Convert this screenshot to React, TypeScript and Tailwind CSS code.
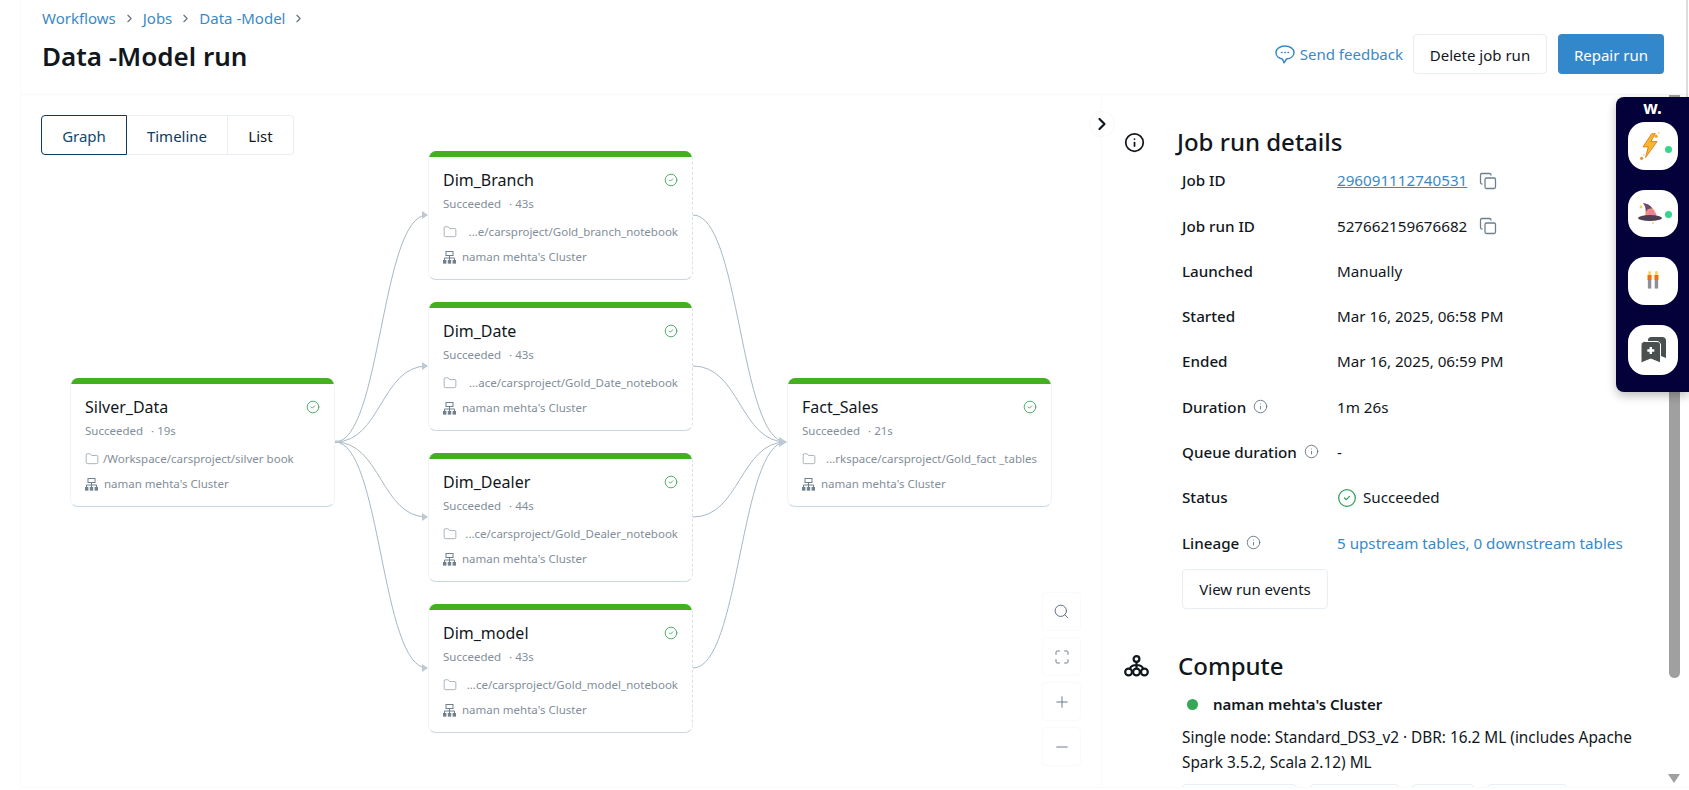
import React from "react";
import { ChevronRight, CircleCheck, Copy, Folder, Info, Maximize, Minus, Plus, Search } from "lucide-react";

const FONT = "font-['Noto_Sans','Open_Sans',sans-serif]";

interface NodeData {
  name: string;
  time: string;
  path: string;
  pos: string;
  pathClass: string;
  dashed?: boolean;
}

const NODES: NodeData[] = [
  { name: "Silver_Data", time: "19s", path: "/Workspace/carsproject/silver book", pos: "left-[49px] top-[283px]", pathClass: "ml-[4px]" },
  { name: "Dim_Branch", time: "43s", path: "...e/carsproject/Gold_branch_notebook", pos: "left-[407px] top-[56px]", pathClass: "ml-auto", dashed: true },
  { name: "Dim_Date", time: "43s", path: "...ace/carsproject/Gold_Date_notebook", pos: "left-[407px] top-[207px]", pathClass: "ml-auto", dashed: true },
  { name: "Dim_Dealer", time: "44s", path: "...ce/carsproject/Gold_Dealer_notebook", pos: "left-[407px] top-[358px]", pathClass: "ml-auto", dashed: true },
  { name: "Dim_model", time: "43s", path: "...ce/carsproject/Gold_model_notebook", pos: "left-[407px] top-[509px]", pathClass: "ml-auto", dashed: true },
  { name: "Fact_Sales", time: "21s", path: "...rkspace/carsproject/Gold_fact _tables", pos: "left-[766px] top-[283px]", pathClass: "ml-auto" },
];

// edge end points, in graph coordinates
const EDGE_Y = [120, 271, 422, 573];

function ClusterIcon() {
  return (
    <svg width="13" height="13" viewBox="0 0 13 13" fill="none" stroke="#6f7f8c" strokeWidth="1" className="shrink-0">
      <rect x="3" y="0.5" width="7" height="4" />
      <path d="M6.5 4.5V7M1.5 9.5V7H11.5V9.5M6.5 7V9.5" />
      <rect x="0.5" y="9.5" width="2.4" height="2.6" fill="#6f7f8c" />
      <rect x="5.3" y="9.5" width="2.4" height="2.6" fill="#6f7f8c" />
      <rect x="10.1" y="9.5" width="2.4" height="2.6" fill="#6f7f8c" />
    </svg>
  );
}

function ComputeIcon() {
  return (
    <svg width="25" height="22" viewBox="0 0 25 22" fill="none" stroke="#11171c" strokeWidth="2.2" className="shrink-0">
      <circle cx="12.5" cy="4" r="2.9" />
      <circle cx="4.6" cy="17" r="3.4" />
      <circle cx="12.5" cy="17" r="3.4" />
      <circle cx="20.4" cy="17" r="3.4" />
      <path d="M12.5 7V13.5M6 13.5C7 11 9.5 10 12.5 10C15.5 10 18 11 19 13.5" />
    </svg>
  );
}

function FeedbackIcon() {
  return (
    <svg width="20" height="19" viewBox="0 0 20 19" fill="none" stroke="#3b89c4" strokeWidth="1.5" className="shrink-0">
      <path d="M10 1C5 1 1 3.6 1 7.5C1 11 4 13.5 7.5 14L9 17.8L11.5 14C15.7 13.6 19 11 19 7.5C19 3.6 15 1 10 1Z" strokeLinejoin="round" />
      <path d="M6.5 7.5H7M9.8 7.5H10.3M13 7.5H13.5" strokeLinecap="round" />
    </svg>
  );
}

function JobNode({ node }: { node: NodeData }) {
  return (
    <div
      className={`absolute ${node.pos} h-[129px] w-[265px] overflow-hidden rounded-[8px] border border-t-0 border-b-[#c9d9e4] border-l-[#f1f4f7] bg-white px-[14px] ${node.dashed ? "border-r-[#d5e1e9] [border-right-style:dashed]" : "border-r-[#f1f4f7]"}`}
    >
      <div className="absolute inset-x-0 top-0 h-[6px] bg-[#44b01f]" />
      <div className="mt-[17px] flex h-[24px] items-center justify-between">
        <span className="text-[16px] leading-[24px] text-[#11171c]">{node.name}</span>
        <CircleCheck size={14} strokeWidth={1.5} className="text-[#3ba55c]" />
      </div>
      <div className="mt-[4px] flex h-[16px] items-center text-[11.5px] leading-[16px] text-[#828e99]">
        <span>Succeeded</span>
        <span className="ml-[8px]">· {node.time}</span>
      </div>
      <div className="mt-[12px] flex h-[16px] items-center text-[11.5px] leading-[16px] text-[#828e99]">
        <Folder size={14} strokeWidth={1} className="shrink-0 text-[#6f7f8c]" />
        <span className={`${node.pathClass} whitespace-nowrap`}>{node.path}</span>
      </div>
      <div className="mt-[9px] flex h-[16px] items-center text-[11.5px] leading-[16px] text-[#828e99]">
        <ClusterIcon />
        <span className="ml-[6px]">naman mehta's Cluster</span>
      </div>
    </div>
  );
}

function Edges() {
  return (
    <svg width="1060" height="690" className="absolute left-0 top-0" fill="none" stroke="#a8b8c5" strokeWidth="1">
      {EDGE_Y.map((y) => (
        <g key={y}>
          <path d={`M314 347C360 347 360 ${y} 406 ${y}`} />
          <path d={`M672 ${y}C719 ${y} 719 347 765 347`} />
          <path d={`M401 ${y - 4}L407 ${y}L401 ${y + 4}Z`} fill="#bcc9d3" stroke="none" />
        </g>
      ))}
      <path d="M758 342L766 347L758 352Z" fill="#bcc9d3" stroke="none" />
      <path d="M314 346.5H320" stroke="#bcc9d3" strokeWidth="2" />
    </svg>
  );
}

function Graph() {
  const controls = [
    <Search key="s" size={17} strokeWidth={1.4} />,
    <Maximize key="m" size={16} strokeWidth={1.4} />,
    <Plus key="p" size={18} strokeWidth={1.2} />,
    <Minus key="n" size={18} strokeWidth={1.2} />,
  ];
  return (
    <div className="relative flex-1">
      <div className="absolute left-[20px] top-[20px] flex h-[40px] text-[15px] text-[#11171c]">
        <div className="z-10 flex w-[86px] items-center justify-center rounded-l-[4px] border border-[#0e3a5c] pt-[2px] text-[#0e4a70]">Graph</div>
        <div className="flex w-[101px] items-center justify-center border-y border-r border-[#e8eef2] pt-[2px] text-[#0e3a5c]">Timeline</div>
        <div className="flex w-[66px] items-center justify-center rounded-r-[4px] border-y border-r border-[#e8eef2] pt-[2px]">List</div>
      </div>
      <Edges />
      {NODES.map((node) => (
        <JobNode key={node.name} node={node} />
      ))}
      <div className="absolute left-[1021px] top-[497px] flex w-[39px] flex-col gap-[6px] text-[#5f717f]">
        {controls.map((icon, i) => (
          <div key={i} className="flex h-[39px] items-center justify-center rounded-[4px] border border-[#f9fafb] bg-white">
            {icon}
          </div>
        ))}
      </div>
    </div>
  );
}

function Row({ label, info, children }: { label: string; info?: boolean; children: React.ReactNode }) {
  return (
    <div className="flex h-[45.3px] items-center text-[15.2px] text-[#11171c]">
      <div className="flex w-[155px] items-center font-medium">
        <span>{label}</span>
        {info && <Info size={15} strokeWidth={1.4} className="mb-[2px] ml-[7px] text-[#5f717f]" />}
      </div>
      <div className="flex items-center">{children}</div>
    </div>
  );
}

function DetailsPane() {
  return (
    <div className="relative w-[588px] shrink-0 border-l border-[#f8fafb]">
      <div className="h-full overflow-hidden pl-[22px]">
        <div className="mt-[35px] flex h-[24px] items-center">
          <Info size={21} strokeWidth={2} className="text-[#11171c]" />
          <h2 className="ml-[32px] text-[24px] font-medium leading-[24px] text-[#11171c]">Job run details</h2>
        </div>
        <div className="mt-[3px] pl-[58px] pt-[1px]">
          <Row label="Job ID">
            <span className="text-[#3b89c4] underline">296091112740531</span>
            <Copy size={18} strokeWidth={1.7} className="ml-[12px] text-[#6b7f8f]" />
          </Row>
          <Row label="Job run ID">
            <span>527662159676682</span>
            <Copy size={18} strokeWidth={1.7} className="ml-[12px] text-[#6b7f8f]" />
          </Row>
          <Row label="Launched">Manually</Row>
          <Row label="Started">Mar 16, 2025, 06:58 PM</Row>
          <Row label="Ended">Mar 16, 2025, 06:59 PM</Row>
          <Row label="Duration" info>1m 26s</Row>
          <Row label="Queue duration" info>-</Row>
          <Row label="Status">
            <CircleCheck size={20} strokeWidth={1.5} className="text-[#2f9e5b]" />
            <span className="ml-[6px]">Succeeded</span>
          </Row>
          <Row label="Lineage" info>
            <span className="text-[#3b89c4]">5 upstream tables, 0 downstream tables</span>
          </Row>
          <button className="mt-[3px] h-[40px] w-[146px] rounded-[4px] border border-[#e8eef2] bg-white pt-[2px] text-[15px] text-[#11171c]">
            View run events
          </button>
        </div>
        <div className="mt-[45px] flex h-[24px] items-center">
          <ComputeIcon />
          <h2 className="ml-[29px] text-[24px] font-medium leading-[24px] text-[#11171c]">Compute</h2>
        </div>
        <div className="pl-[58px] text-[15px] text-[#11171c]">
          <div className="mt-[15px] flex h-[24px] items-center">
            <span className="ml-[5px] h-[11px] w-[11px] rounded-full bg-[#34a853]" />
            <span className="ml-[15px] font-semibold">naman mehta's Cluster</span>
          </div>
          <p className="mt-[8px] w-[460px] text-[15.35px] leading-[25px]">
            Single node: Standard_DS3_v2 · DBR: 16.2 ML (includes Apache Spark 3.5.2, Scala 2.12) ML
          </p>
          <div className="mt-[9px] flex gap-[13px]">
            <div className="h-[40px] w-[115px] rounded-[4px] border border-[#e8eef2]" />
            <div className="h-[40px] w-[89px] rounded-[4px] border border-[#e8eef2]" />
            <div className="h-[40px] w-[62px] rounded-[4px] border border-[#e8eef2]" />
            <div className="h-[40px] w-[80px] rounded-[4px] border border-[#e8eef2]" />
          </div>
        </div>
        <div className="absolute right-[9px] top-0 h-[583px] w-[11px] rounded-b-[6px] bg-[#a0a0a0]" />
        <svg width="12" height="9" viewBox="0 0 12 9" className="absolute bottom-[4px] right-[9px]">
          <path d="M0 0H12L6 9Z" fill="#a0a0a0" />
        </svg>
      </div>
      <button aria-label="Collapse" className="absolute left-[-13px] top-[16px] z-10 flex h-[26px] w-[26px] items-center justify-center rounded-full border border-[#f6f8fa] bg-white">
        <ChevronRight size={20} strokeWidth={2.6} className="text-[#11171c]" />
      </button>
    </div>
  );
}

function BoltArt() {
  return (
    <svg width="22" height="30" viewBox="0 0 24 34" className="mr-[6px]">
      <path d="M14 3L4 18H10L7 30L20 12H13L18 3Z" fill="#f9b62c" stroke="#d9791a" strokeWidth="1" />
      <circle cx="19" cy="6" r="1.8" fill="#f2a52a" />
      <circle cx="22" cy="2" r="1" fill="#f7c65a" />
      <circle cx="2.5" cy="31" r="1.8" fill="#e8932a" />
      <circle cx="5" cy="27" r="1" fill="#f7c65a" />
    </svg>
  );
}

function HatArt() {
  return (
    <svg width="26" height="26" viewBox="0 0 26 24" className="mb-[3px] mr-[6px]">
      <path d="M8 17C9 11 9 7 6 3C12 4 18 8 20 17Z" fill="#f0907a" />
      <path d="M6 3C12 4 14 6 15 8.5C12.5 8 10 9 9 12C9 8 8 5 6 3Z" fill="#6a4a72" />
      <path d="M13 10C16 10 17.5 13 18 17H12C11 14 11.5 11 13 10Z" fill="#ec7fa0" />
      <ellipse cx="13" cy="18" rx="12" ry="3" fill="#4f3f52" />
      <circle cx="4" cy="7" r="1.4" fill="#f7d04a" />
      <circle cx="16" cy="23" r="0.9" fill="#f7d04a" />
    </svg>
  );
}

function PeopleArt() {
  return (
    <svg width="12" height="18" viewBox="0 0 14 21" className="mb-[2px]">
      {[0, 8].map((x) => (
        <g key={x} transform={`translate(${x} 0)`}>
          <rect x="1.5" y="0" width="3" height="4.5" rx="1.5" fill="#f9d34a" />
          <rect x="0" y="4.5" width="6" height="6" fill="#f9d34a" />
          <rect x="1" y="4.5" width="4" height="6" fill="#f2682c" />
          <rect x="1" y="10.5" width="4" height="10" fill="#8f8f99" />
        </g>
      ))}
    </svg>
  );
}

function BookmarksArt() {
  return (
    <svg width="25" height="26" viewBox="0 0 25 26">
      <path d="M7 3C7 1 8.5 0 10 0H21.5C23.5 0 25 1.5 25 3.5V21L20 19V7H7Z" fill="#4a4f50" />
      <path d="M0 8C0 6 1.5 4.5 3.5 4.5H16C18 4.5 19.5 6 19.5 8V26L9.8 22L0 26Z" fill="#4a4f50" stroke="#fff" strokeWidth="1" />
      <path d="M9.8 10V17M6.3 13.5H13.3" stroke="#fff" strokeWidth="2.4" />
    </svg>
  );
}

function SideWidget() {
  const items = [
    { art: <BoltArt />, dot: true, h: "h-[48px]", dotTop: "top-[24px]" },
    { art: <HatArt />, dot: true, h: "h-[47px]", dotTop: "top-[21px]" },
    { art: <PeopleArt />, dot: false, h: "h-[48px]", dotTop: "" },
    { art: <BookmarksArt />, dot: false, h: "h-[50px]", dotTop: "" },
  ];
  return (
    <div className="absolute left-[1616px] top-[97px] h-[295px] w-[73px] rounded-l-[8px] bg-[#03003a] shadow-[0_4px_10px_rgba(0,0,0,0.25)]">
      <div className="h-[25px] text-center text-[17px] font-bold leading-[22px] text-white">w.</div>
      <div className="ml-[12px] flex w-[50px] flex-col gap-[20px]">
        {items.map((item, i) => (
          <div key={i} className={`relative flex ${item.h} items-center justify-center rounded-[17px] bg-white`}>
            {item.art}
            {item.dot && <span className={`absolute right-[6px] ${item.dotTop} h-[7px] w-[7px] rounded-full bg-[#35d58d]`} />}
          </div>
        ))}
      </div>
    </div>
  );
}

export default function App() {
  return (
    <div className={`relative h-screen w-full overflow-hidden bg-white ${FONT}`}>
      <div className="ml-[20px] flex h-[788px] flex-col border-b border-l border-[#f8fafb]">
        <header className="flex h-[95px] shrink-0 justify-between border-b border-[#f6f8fa] pl-[21px] pr-[25px]">
          <div>
            <nav className="mt-[8px] flex h-[20px] items-center text-[15px] text-[#3b89c4]">
              <span>Workflows</span>
              <ChevronRight size={13} className="mx-[7px] text-[#5f717f]" />
              <span>Jobs</span>
              <ChevronRight size={13} className="mx-[7px] text-[#5f717f]" />
              <span>Data -Model</span>
              <ChevronRight size={13} className="mx-[7px] text-[#5f717f]" />
            </nav>
            <h1 className="mt-[10px] text-[26px] font-semibold leading-[36px] text-[#11171c]">Data -Model run</h1>
          </div>
          <div className="mt-[34px] flex h-[40px] items-center text-[15px]">
            <FeedbackIcon />
            <span className="ml-[5px] pt-[1px] text-[#3b89c4]">Send feedback</span>
            <button className="ml-[10px] h-[40px] w-[134px] rounded-[4px] border border-[#e8eef2] bg-white pt-[2px] text-[#11171c]">Delete job run</button>
            <button className="ml-[11px] h-[40px] w-[106px] rounded-[4px] bg-[#3388cc] pt-[2px] text-white">Repair run</button>
          </div>
        </header>
        <div className="flex min-h-0 flex-1">
          <Graph />
          <DetailsPane />
        </div>
      </div>
      <div className="absolute right-[1px] top-0 h-[97px] w-[2px] bg-[#dcdcdc]" />
      <SideWidget />
    </div>
  );
}
